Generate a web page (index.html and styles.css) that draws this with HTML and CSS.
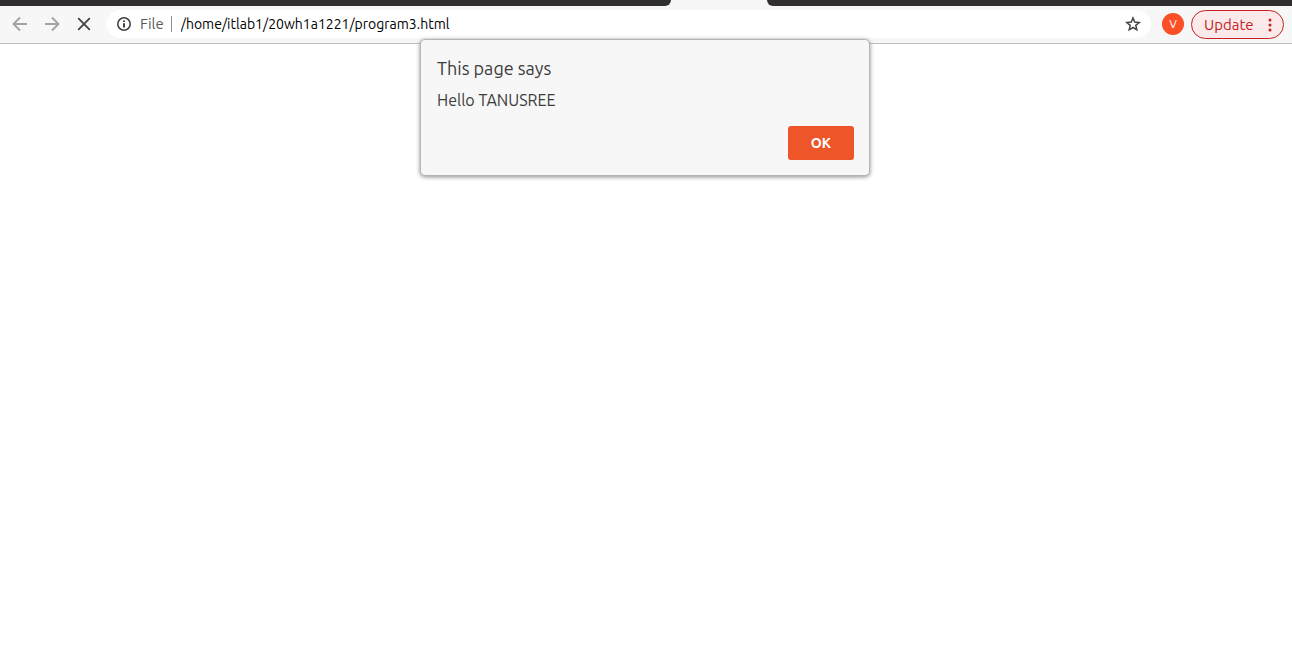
FILE: index.html
```html
<!DOCTYPE html>
<html lang="en">
<head>
<meta charset="utf-8">
<title>program3.html</title>
<link rel="stylesheet" href="styles.css">
</head>
<body>
<header class="browser">
  <div class="tabstrip">
    <div class="strip strip-before"></div>
    <div class="tab"></div>
    <div class="strip strip-after"></div>
  </div>
  <div class="toolbar">
    <nav class="nav">
      <button class="icon-button muted" type="button" aria-label="Back">
        <svg width="16" height="16" viewBox="0 0 16 16"><path d="M15 8H2M8 1.5L1.5 8L8 14.5"/></svg>
      </button>
      <button class="icon-button muted" type="button" aria-label="Forward">
        <svg width="16" height="16" viewBox="0 0 16 16"><path d="M1 8H14M8 1.5L14.5 8L8 14.5"/></svg>
      </button>
      <button class="icon-button" type="button" aria-label="Stop">
        <svg width="16" height="16" viewBox="0 0 16 16"><path d="M2.2 2.2L13.8 13.8M13.8 2.2L2.2 13.8"/></svg>
      </button>
    </nav>
    <div class="omnibox">
      <svg class="info" width="16" height="16" viewBox="0 0 16 16"><circle cx="8" cy="8" r="6.2"/><path d="M8 7.2V11.5M8 4.4V6"/></svg>
      <label class="scheme" for="address">File</label>
      <input class="address" id="address" type="text" value="/home/itlab1/20wh1a1221/program3.html">
      <button class="star" type="button" aria-label="Bookmark this page">
        <svg width="16" height="16" viewBox="0 0 16 16"><path d="M8 2L9.7 6.1L14.2 6.5L10.8 9.4L11.8 13.8L8 11.5L4.2 13.8L5.2 9.4L1.8 6.5L6.3 6.1Z"/></svg>
      </button>
    </div>
    <button class="avatar" type="button" aria-label="Profile">V</button>
    <button class="update" type="button">
      <span>Update</span>
      <svg width="4" height="14" viewBox="0 0 4 14"><circle cx="2" cy="2" r="1.5"/><circle cx="2" cy="7" r="1.5"/><circle cx="2" cy="12" r="1.5"/></svg>
    </button>
  </div>
</header>
<main class="page">
  <section class="dialog" role="alertdialog" aria-labelledby="dialog-title" aria-describedby="dialog-message">
    <h1 class="dialog-title" id="dialog-title">This page says</h1>
    <p class="dialog-message" id="dialog-message">Hello TANUSREE</p>
    <div class="dialog-actions"><button class="ok" type="button">OK</button></div>
  </section>
</main>
</body>
</html>
```
FILE: styles.css
```css
* { box-sizing: border-box; }
body {
  margin: 0;
  background: #fff;
  color: #3c3c3c;
  font-family: Ubuntu, "Noto Sans", "Open Sans", sans-serif;
}
button, input { font-family: inherit; margin: 0; padding: 0; border: 0; background: none; }
.browser { background: #f7f7f7; border-bottom: 1px solid #bfbfbf; }
.tabstrip { display: flex; height: 6px; }
.strip { background: #302d2e; }
.strip-before { flex: 671; border-bottom-right-radius: 8px; }
.strip-after { flex: 525; border-bottom-left-radius: 8px; }
.tab { width: 96px; }
.toolbar { display: flex; align-items: flex-start; padding: 4px 8px 4px 4px; }
.nav { display: flex; margin-right: 6px; }
.icon-button { display: grid; place-items: center; width: 32px; height: 28px; }
.icon-button svg { fill: none; stroke: #444; stroke-width: 1.8; }
.icon-button.muted svg { stroke: #a3a3a3; }
.omnibox {
  flex: 1;
  display: flex;
  align-items: center;
  min-width: 0;
  height: 28px;
  padding: 0 10px;
  border-radius: 14px;
  background: #fff;
}
.info { flex: none; fill: none; stroke: #444; stroke-width: 2; }
.info circle { stroke-width: 1.6; }
.scheme {
  margin: 0 9px 0 8px;
  padding-right: 7px;
  border-right: 1px solid #919191;
  color: #5a5a5a;
  font-size: 15px;
  line-height: 16px;
}
.address { flex: 1; min-width: 0; height: 28px; color: #000; font-size: 14px; }
.star { display: grid; }
.star svg { fill: none; stroke: #444; stroke-width: 1.5; }
.avatar {
  width: 22px;
  height: 22px;
  margin: 3px 7px 0 11px;
  border-radius: 50%;
  background: #fb4f27;
  color: #fff;
  font-size: 12px;
  line-height: 22px;
}
.update {
  display: flex;
  align-items: center;
  justify-content: space-between;
  width: 93px;
  height: 29px;
  padding: 0 11px 0 12px;
  border: 1px solid #c5221f;
  border-radius: 15px;
  background: #fbeae9;
  color: #c5221f;
  font-size: 15px;
}
.update svg { fill: #c5221f; }
.dialog {
  position: absolute;
  top: 39px;
  left: calc(50% - 226px);
  width: 450px;
  padding: 17px 15px 15px 16px;
  border: 1px solid #b5b5b5;
  border-radius: 5px;
  background: #f7f7f7;
  box-shadow: 0 1px 4px rgba(0, 0, 0, 0.45);
}
.dialog-title { margin: 0; font-size: 18px; font-weight: 400; line-height: 22px; }
.dialog-message { margin: 11px 0 0; font-size: 16px; line-height: 20px; }
.dialog-actions { display: flex; justify-content: flex-end; margin-top: 16px; }
.ok {
  width: 66px;
  height: 34px;
  border-radius: 3px;
  background: #ee5529;
  color: #fff;
  font-size: 14px;
  font-weight: 700;
}
```
